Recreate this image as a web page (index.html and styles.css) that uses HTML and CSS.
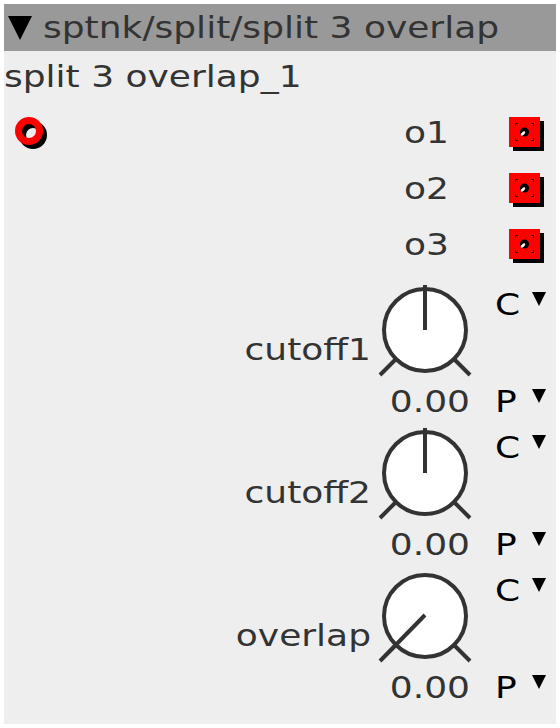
FILE: index.html
```html
<!DOCTYPE html>
<html>
<head>
<meta charset="utf-8">
<link rel="stylesheet" href="styles.css">
</head>
<body>
<div class="panel">
  <div class="title">
    <svg class="tri-big" width="24" height="24" viewBox="0 0 24 24"><polygon points="0,0 24,0 12,24" fill="#000"/></svg>
    <span class="t">sptnk/split/split 3 overlap</span>
  </div>
  <div class="instance"><span class="t">split 3 overlap_1</span></div>
  <div class="io">
    <div class="inlets">
      <svg class="inlet" width="40" height="40" viewBox="0 0 40 40">
        <circle cx="24" cy="24" r="10.5" fill="none" stroke="#000" stroke-width="7"/>
        <circle cx="20" cy="20" r="10.5" fill="none" stroke="#f00" stroke-width="7"/>
      </svg>
    </div>
    <div class="outlets">
      <div class="outlet"><span class="t">o1</span>
        <svg class="jack" width="36" height="40" viewBox="0 0 36 40">
          <rect x="4" y="10" width="31" height="30" fill="#000"/>
          <rect x="0" y="6" width="31" height="30" fill="#f00"/>
          <circle cx="15.5" cy="21" r="4.5" fill="#000"/>
          <ellipse cx="14" cy="22.5" rx="2.8" ry="1.4" fill="#fff" transform="rotate(-45 14 22.5)"/>
          <path d="M6.5 14.5V12.5H8.5M22.5 12.5H24.5V14.5M6.5 27.5V29.5H8.5M22.5 29.5H24.5V27.5" stroke="#000" fill="none" stroke-width="1"/>
        </svg>
      </div>
      <div class="outlet"><span class="t">o2</span>
        <svg class="jack" width="36" height="40" viewBox="0 0 36 40">
          <rect x="4" y="10" width="31" height="30" fill="#000"/>
          <rect x="0" y="6" width="31" height="30" fill="#f00"/>
          <circle cx="15.5" cy="21" r="4.5" fill="#000"/>
          <ellipse cx="14" cy="22.5" rx="2.8" ry="1.4" fill="#fff" transform="rotate(-45 14 22.5)"/>
          <path d="M6.5 14.5V12.5H8.5M22.5 12.5H24.5V14.5M6.5 27.5V29.5H8.5M22.5 29.5H24.5V27.5" stroke="#000" fill="none" stroke-width="1"/>
        </svg>
      </div>
      <div class="outlet"><span class="t">o3</span>
        <svg class="jack" width="36" height="40" viewBox="0 0 36 40">
          <rect x="4" y="10" width="31" height="30" fill="#000"/>
          <rect x="0" y="6" width="31" height="30" fill="#f00"/>
          <circle cx="15.5" cy="21" r="4.5" fill="#000"/>
          <ellipse cx="14" cy="22.5" rx="2.8" ry="1.4" fill="#fff" transform="rotate(-45 14 22.5)"/>
          <path d="M6.5 14.5V12.5H8.5M22.5 12.5H24.5V14.5M6.5 27.5V29.5H8.5M22.5 29.5H24.5V27.5" stroke="#000" fill="none" stroke-width="1"/>
        </svg>
      </div>
    </div>
  </div>

  <div class="knob">
    <div class="klabel"><span class="t">cutoff1</span></div>
    <div class="kdial">
      <svg width="100" height="100" viewBox="0 0 100 100">
        <circle cx="50" cy="50" r="41" fill="#fff" stroke="#333" stroke-width="4"/>
        <path d="M21 79L5 95M79 79L95 95M50 50V5" stroke="#333" stroke-width="4" fill="none"/>
      </svg>
      <span class="t val">0.00</span>
    </div>
    <div class="kmenu">
      <div class="sel c"><span class="t">C</span><svg width="14" height="14" viewBox="0 0 14 14"><polygon points="0,0 14,0 7,14" fill="#000"/></svg></div>
      <div class="sel p"><span class="t">P</span><svg width="14" height="14" viewBox="0 0 14 14"><polygon points="0,0 14,0 7,14" fill="#000"/></svg></div>
    </div>
  </div>

  <div class="knob">
    <div class="klabel"><span class="t">cutoff2</span></div>
    <div class="kdial">
      <svg width="100" height="100" viewBox="0 0 100 100">
        <circle cx="50" cy="50" r="41" fill="#fff" stroke="#333" stroke-width="4"/>
        <path d="M21 79L5 95M79 79L95 95M50 50V5" stroke="#333" stroke-width="4" fill="none"/>
      </svg>
      <span class="t val">0.00</span>
    </div>
    <div class="kmenu">
      <div class="sel c"><span class="t">C</span><svg width="14" height="14" viewBox="0 0 14 14"><polygon points="0,0 14,0 7,14" fill="#000"/></svg></div>
      <div class="sel p"><span class="t">P</span><svg width="14" height="14" viewBox="0 0 14 14"><polygon points="0,0 14,0 7,14" fill="#000"/></svg></div>
    </div>
  </div>

  <div class="knob">
    <div class="klabel"><span class="t">overlap</span></div>
    <div class="kdial">
      <svg width="100" height="100" viewBox="0 0 100 100">
        <circle cx="50" cy="50" r="41" fill="#fff" stroke="#333" stroke-width="4"/>
        <path d="M21 79L5 95M79 79L95 95M50 49L7 93" stroke="#333" stroke-width="4" fill="none"/>
      </svg>
      <span class="t val">0.00</span>
    </div>
    <div class="kmenu">
      <div class="sel c"><span class="t">C</span><svg width="14" height="14" viewBox="0 0 14 14"><polygon points="0,0 14,0 7,14" fill="#000"/></svg></div>
      <div class="sel p"><span class="t">P</span><svg width="14" height="14" viewBox="0 0 14 14"><polygon points="0,0 14,0 7,14" fill="#000"/></svg></div>
    </div>
  </div>
</div>
</body>
</html>
```
FILE: styles.css
```css
* { box-sizing: border-box; }
body { margin: 0; background: #fff; }

.panel {
  margin: 4px;
  width: 552px;
  height: 720px;
  background: #eee;
  font-family: "DejaVu Sans", sans-serif;
  color: #333;
  overflow: hidden;
}

.t {
  display: block;
  font-size: 36px;
  line-height: 40px;
  height: 40px;
  white-space: nowrap;
  transform: scaleY(0.83);
  transform-origin: 0 32.5px;
}

.title {
  height: 47px;
  background: #999;
  display: flex;
  align-items: flex-start;
  padding-left: 4px;
}
.tri-big { margin-top: 12px; margin-right: 11px; flex: none; }
.title .t { margin-top: 2px; }

.instance { margin-top: 4px; }

.io { margin-top: 8px; display: flex; }
.inlets { width: 60px; padding-left: 5px; padding-top: 8px; }
.inlet { display: block; }
.outlets { flex: 1; }
.outlet {
  height: 56px;
  display: flex;
  align-items: center;
  justify-content: flex-end;
  padding-right: 11px;
}
.jack { margin-left: 60px; display: block; }

.knob {
  display: grid;
  grid-template-columns: 1fr 100px 81px;
  height: 143px;
}
.klabel {
  padding-top: 57px;
  padding-right: 4px;
  display: flex;
  justify-content: flex-end;
}
.kdial svg { display: block; margin-top: 9px; }
.kdial .val { text-align: right; padding-right: 5px; }

.kmenu { padding-left: 20px; }
.sel { display: flex; align-items: flex-start; color: #000; }
.sel .t { width: 37px; }
.sel svg { margin-top: 9px; display: block; }
.sel.c { margin-top: 12px; }
.sel.p { margin-top: 57px; }
```
